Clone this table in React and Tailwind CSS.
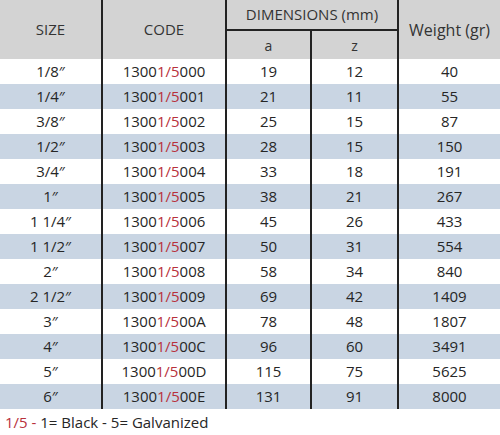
import React from 'react';

const rows = [
  ['1/8″', '000', 19, 12, 40],
  ['1/4″', '001', 21, 11, 55],
  ['3/8″', '002', 25, 15, 87],
  ['1/2″', '003', 28, 15, 150],
  ['3/4″', '004', 33, 18, 191],
  ['1″', '005', 38, 21, 267],
  ['1 1/4″', '006', 45, 26, 433],
  ['1 1/2″', '007', 50, 31, 554],
  ['2″', '008', 58, 34, 840],
  ['2 1/2″', '009', 69, 42, 1409],
  ['3″', '00A', 78, 48, 1807],
  ['4″', '00C', 96, 60, 3491],
  ['5″', '00D', 115, 75, 5625],
  ['6″', '00E', 131, 91, 8000],
];

const App = () => {
  return (
    <div className="w-[500px] h-[435px] bg-white text-[#262626] font-['Open_Sans',sans-serif] text-[15px] overflow-hidden">
      {/* header */}
      <div className="grid grid-cols-[103px_124px_85px_87px_101px] h-[59px] bg-[#d3d3d3] text-[#333]">
        <div className="row-span-2 flex items-center justify-center border-r-2 border-[#222] text-[15px]">SIZE</div>
        <div className="row-span-2 flex items-center justify-center border-r-2 border-[#222] text-[15px]">CODE</div>
        <div className="col-span-2 flex items-center justify-center border-r-2 border-b-2 border-[#222] text-[15px]">DIMENSIONS (mm)</div>
        <div className="row-span-2 flex items-center justify-center text-[16px]">Weight (gr)</div>
        <div className="flex items-center justify-center border-r-2 border-[#222] text-[14px]">a</div>
        <div className="flex items-center justify-center border-r-2 border-[#222] text-[14px]">z</div>
      </div>

      {/* body */}
      {rows.map(([size, code, a, z, w], i) => (
        <div
          key={size}
          className={`grid grid-cols-[103px_124px_85px_87px_101px] h-[25px] ${i % 2 ? 'bg-[#c9d5e3]' : 'bg-white'}`}
        >
          <div className="flex items-center justify-center border-r-2 border-[#222]">{size}</div>
          <div className="flex items-center justify-center border-r-2 border-[#222]">
            1300<span className="text-[#b8313c]">1/5</span>{code}
          </div>
          <div className="flex items-center justify-center border-r-2 border-[#222]">{a}</div>
          <div className="flex items-center justify-center border-r-2 border-[#222]">{z}</div>
          <div className="flex items-center justify-center">{w}</div>
        </div>
      ))}

      <div className="pl-[5px] pt-[2px] text-[15px]">
        <span className="text-[#b8313c]">1/5 -</span> 1= Black - 5= Galvanized
      </div>
    </div>
  );
};

export default App;
